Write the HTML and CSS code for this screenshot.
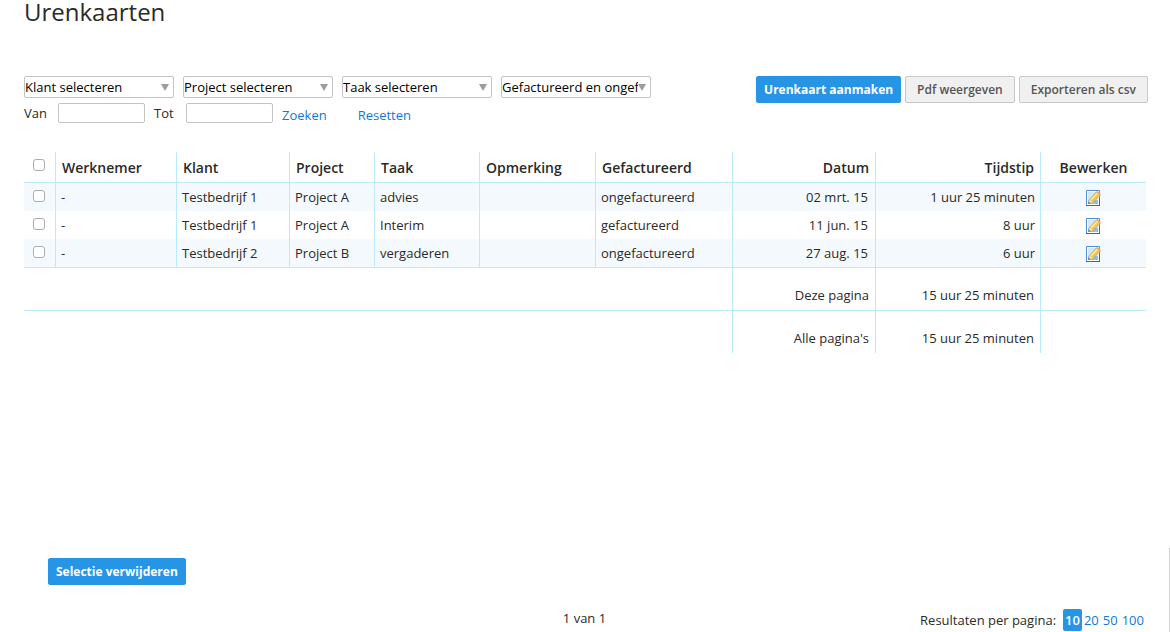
FILE: index.html
```html
<!DOCTYPE html>
<html lang="nl">
<head>
<meta charset="utf-8">
<title>Urenkaarten</title>
<link rel="stylesheet" href="styles.css">
</head>
<body>
<svg class="symbols" aria-hidden="true">
  <symbol id="edit" viewBox="1 0 16 16">
    <path d="M1.500 .5H14.500V15.500H1.500Z" fill="#fff" stroke="#4f8fd8"/>
    <path d="M1 15.500H15M14.500 8V15" fill="none" stroke="#3468b8"/>
    <path d="M3 2H13V14H3Z" fill="#d3e9fb"/>
    <path d="M3 10H13V14H3Z" fill="#84c4f4"/>
    <path d="M3.500 13.500L4.800 9L11.500 1.800L15.400 5L8 12.500Z" fill="#f3c75a" stroke="#c0913f" stroke-width=".7"/>
    <path d="M6 9.600L12.300 3.200" stroke="#fdeb9c" stroke-width="1.600"/>
    <path d="M11.300 2L12.500 1L15.700 3.800L15.300 5Z" fill="#e3b184"/>
    <path d="M3.500 13.500L4.700 9.600L7.800 12.400Z" fill="#f6e2b8"/>
    <path d="M3.300 13.700L3.900 11.700L5.400 13Z" fill="#555"/>
  </symbol>
</svg>
<main class="page">
  <h1 class="title">Urenkaarten</h1>
  <form class="toolbar">
    <div class="filters">
      <div class="filter-row">
        <div class="select-box"><select class="select" aria-label="Klant"><option>Klant selecteren</option></select><span class="arrow"></span></div>
        <div class="select-box"><select class="select" aria-label="Project"><option>Project selecteren</option></select><span class="arrow"></span></div>
        <div class="select-box"><select class="select" aria-label="Taak"><option>Taak selecteren</option></select><span class="arrow"></span></div>
        <div class="select-box"><select class="select" aria-label="Status"><option>Gefactureerd en ongefactureerd</option></select><span class="arrow"></span></div>
      </div>
      <div class="date-row">
        <label class="date-label date-from" for="van">Van</label><input class="date" id="van" type="text">
        <label class="date-label date-to" for="tot">Tot</label><input class="date" id="tot" type="text">
        <div class="search-links"><a href="#">Zoeken</a><a href="#">Resetten</a></div>
      </div>
    </div>
    <div class="actions">
      <button class="button primary" type="button">Urenkaart aanmaken</button>
      <button class="button" type="button">Pdf weergeven</button>
      <button class="button" type="button">Exporteren als csv</button>
    </div>
  </form>
  <table class="cards">
    <colgroup><col class="c-check"><col class="c-worker"><col class="c-client"><col class="c-project"><col class="c-task"><col class="c-note"><col class="c-billed"><col class="c-date"><col class="c-time"><col></colgroup>
    <thead>
      <tr><th class="check"><input type="checkbox" aria-label="Alles selecteren"></th><th>Werknemer</th><th>Klant</th><th>Project</th><th>Taak</th><th>Opmerking</th><th>Gefactureerd</th><th class="right">Datum</th><th class="right">Tijdstip</th><th class="center">Bewerken</th></tr>
    </thead>
    <tbody>
      <tr><td class="check"><input type="checkbox" aria-label="Selecteer rij 1"></td><td>-</td><td>Testbedrijf 1</td><td>Project A</td><td>advies</td><td></td><td>ongefactureerd</td><td class="right date-cell">02 mrt. 15</td><td class="right">1 uur 25 minuten</td><td class="center"><a class="edit" href="#" aria-label="Bewerken"><svg class="icon"><use href="#edit"/></svg></a></td></tr>
      <tr><td class="check"><input type="checkbox" aria-label="Selecteer rij 2"></td><td>-</td><td>Testbedrijf 1</td><td>Project A</td><td>Interim</td><td></td><td>gefactureerd</td><td class="right date-cell">11 jun. 15</td><td class="right">8 uur</td><td class="center"><a class="edit" href="#" aria-label="Bewerken"><svg class="icon"><use href="#edit"/></svg></a></td></tr>
      <tr><td class="check"><input type="checkbox" aria-label="Selecteer rij 3"></td><td>-</td><td>Testbedrijf 2</td><td>Project B</td><td>vergaderen</td><td></td><td>ongefactureerd</td><td class="right date-cell">27 aug. 15</td><td class="right">6 uur</td><td class="center"><a class="edit" href="#" aria-label="Bewerken"><svg class="icon"><use href="#edit"/></svg></a></td></tr>
    </tbody>
    <tfoot>
      <tr><td colspan="7"></td><td class="right">Deze pagina</td><td class="right">15 uur 25 minuten</td><td></td></tr>
      <tr><td colspan="7"></td><td class="right">Alle pagina's</td><td class="right">15 uur 25 minuten</td><td></td></tr>
    </tfoot>
  </table>
</main>
<footer class="bottom">
  <button class="button primary" type="button">Selectie verwijderen</button>
  <div class="paging">
    <p class="page-count">1 van 1</p>
    <div class="per-page"><span class="per-label">Resultaten per pagina:</span><a class="current" href="#">10</a><div class="sizes"><a href="#">20</a><a href="#">50</a><a href="#">100</a></div></div>
  </div>
</footer>
</body>
</html>
```
FILE: styles.css
```css
* { box-sizing: border-box; }
body {
  margin: 0;
  min-height: 100vh;
  display: flex;
  flex-direction: column;
  background: #fff;
  color: #2a2a2a;
  font: 13px/18px "Open Sans", sans-serif;
}
a { color: #0f78d8; text-decoration: none; }
.symbols { display: none; }
.page { padding: 0 24px; min-height: 548px; }
.title { margin: 0 0 52px; font-size: 24px; line-height: 24px; font-weight: 400; }

.toolbar { display: flex; justify-content: space-between; margin-right: -2px; }
.filter-row { display: flex; gap: 9px; margin-bottom: 5px; }
.select-box { position: relative; width: 150px; }
.select {
  display: block;
  width: 100%;
  height: 22px;
  padding: 0 12px 0 0;
  border: 1px solid #c4c4c4;
  border-radius: 2px;
  appearance: none;
  background: #fff;
  color: #000;
  font: inherit;
}
.arrow {
  position: absolute;
  top: 8px;
  right: 5px;
  width: 8px;
  height: 7px;
  background: #9c9ca1;
  clip-path: polygon(0 0, 100% 0, 50% 100%);
  pointer-events: none;
}
.date-row { display: flex; align-items: center; height: 20px; }
.date-from { width: 34px; }
.date-to { width: 41px; padding-left: 9px; }
.date {
  width: 87px;
  height: 20px;
  padding: 0 4px;
  border: 1px solid #c4c4c4;
  border-radius: 2px;
  background: #fff;
  font: inherit;
}
.search-links { display: flex; gap: 31px; padding: 4px 0 0 9px; }

.actions { display: flex; gap: 4px; align-items: flex-start; }
.button {
  height: 27px;
  padding: 0 11px;
  border: 1px solid #c8c8c8;
  border-radius: 2px;
  background: #f0f0f0;
  color: #555;
  font: 600 12px/18px "Open Sans", sans-serif;
  white-space: nowrap;
}
.primary { padding: 0 7px; border-color: #2795e6; background: #2795e6; color: #fff; font-weight: 700; }

.cards { width: 100%; margin-top: 29px; table-layout: fixed; border-collapse: separate; border-spacing: 0; }
.c-check { width: 32px; }
.c-worker { width: 121px; }
.c-client { width: 113px; }
.c-project { width: 85px; }
.c-task { width: 105px; }
.c-note { width: 116px; }
.c-billed { width: 137px; }
.c-date { width: 143px; }
.c-time { width: 165px; }
.cards th, .cards td { padding: 0 5px; border-right: 1px solid #b9ebfb; text-align: left; white-space: nowrap; }
.cards th:last-child, .cards td:last-child { border-right: 0; }
.cards th { height: 31px; padding: 2px 6px 0; border-bottom: 1px solid #b9ebfb; font-size: 14px; font-weight: 600; }
.cards tbody td { height: 28px; }
.cards tbody tr:last-child td { height: 29px; border-bottom: 1px solid #b9ebfb; }
.cards tbody tr:nth-child(odd) { background: #f3f9fd; }
.cards tfoot td { height: 42px; padding: 12px 6px 0; }
.cards tfoot tr:first-child td { height: 43px; border-bottom: 1px solid #b9ebfb; }
.cards .right { text-align: right; }
.cards .date-cell { padding-right: 7px; }
.cards .center { text-align: center; }
.cards .check { padding: 0 1px 2px 0; }
.cards th.check { padding-bottom: 4px; }
.check input {
  display: block;
  width: 12px;
  height: 12px;
  margin: 0 auto;
  border: 1px solid #adadad;
  border-radius: 3px;
  appearance: none;
  background: #fff;
}
.check input:checked { background: #2795e6; }
.edit { display: flex; justify-content: center; padding-top: 2px; }
.icon { width: 16px; height: 16px; overflow: visible; }

.bottom { flex: 1; border-right: 1px solid #d2d2d2; padding: 10px 24px 0; }
.bottom .button { display: block; margin-left: 24px; }
.paging { display: grid; grid-template-columns: 1fr auto 1fr; align-items: start; margin-top: 24px; }
.page-count { grid-column: 2; margin: 0; }
.per-page { display: flex; justify-content: flex-end; align-items: center; gap: 2px; padding-right: 1px; }
.sizes { display: flex; gap: 4px; }
.per-label { margin-right: 5px; }
.current { padding: 2px; border-radius: 2px; background: #2795e6; color: #fff; font-weight: 600; }
```
